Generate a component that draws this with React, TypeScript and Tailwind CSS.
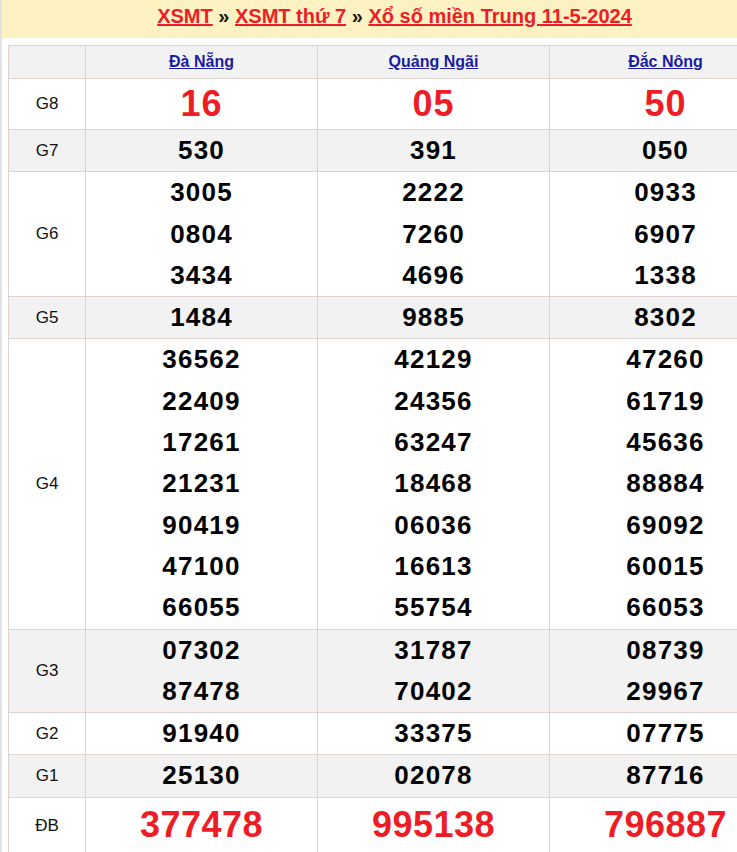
const provinces = ["Đà Nẵng", "Quảng Ngãi", "Đắc Nông"];

type Row = { label: string; values: string[][]; kind?: "big" | "normal" };

const rows: Row[] = [
  { label: "G8", kind: "big", values: [["16"], ["05"], ["50"]] },
  { label: "G7", values: [["530"], ["391"], ["050"]] },
  {
    label: "G6",
    values: [
      ["3005", "0804", "3434"],
      ["2222", "7260", "4696"],
      ["0933", "6907", "1338"],
    ],
  },
  { label: "G5", values: [["1484"], ["9885"], ["8302"]] },
  {
    label: "G4",
    values: [
      ["36562", "22409", "17261", "21231", "90419", "47100", "66055"],
      ["42129", "24356", "63247", "18468", "06036", "16613", "55754"],
      ["47260", "61719", "45636", "88884", "69092", "60015", "66053"],
    ],
  },
  {
    label: "G3",
    values: [
      ["07302", "87478"],
      ["31787", "70402"],
      ["08739", "29967"],
    ],
  },
  { label: "G2", values: [["91940"], ["33375"], ["07775"]] },
  { label: "G1", values: [["25130"], ["02078"], ["87716"]] },
  { label: "ĐB", kind: "big", values: [["377478"], ["995138"], ["796887"]] },
];

export default function App() {
  return (
    <div className="w-[737px] overflow-hidden bg-white font-['Liberation_Sans',Arial,sans-serif]">
      <div className="w-[787px] border-l-2 border-[#e2e2e2] min-h-[852px]">
        {/* Title bar */}
        <div className="h-[38px] bg-[#fff2c2] pt-1 text-center text-[20px] font-bold leading-6">
          <a href="#" className="text-[#ec1d26] underline">XSMT</a>
          <span className="text-[#1a1a1a]"> » </span>
          <a href="#" className="text-[#ec1d26] underline">XSMT thứ 7</a>
          <span className="text-[#1a1a1a]"> » </span>
          <a href="#" className="text-[#ec1d26] underline">Xổ số miền Trung 11-5-2024</a>
        </div>

        {/* Results table */}
        <table className="ml-[6px] mt-[7px] w-[773px] table-fixed border-collapse">
          <colgroup>
            <col className="w-[77px]" />
            <col className="w-[232px]" />
            <col className="w-[232px]" />
            <col className="w-[232px]" />
          </colgroup>
          <thead>
            <tr className="bg-[#f2f2f2]">
              <th className="h-[33px] border border-[#dcd4ce]"></th>
              {provinces.map((p) => (
                <th key={p} className="h-[33px] border border-[#dcd4ce] p-0 text-center text-[16px] font-bold">
                  <a href="#" className="text-[#1c1ca3] underline">{p}</a>
                </th>
              ))}
            </tr>
          </thead>
          <tbody>
            {rows.map((row, i) => (
              <tr key={row.label} className={i % 2 === 1 ? "bg-[#f2f2f2]" : "bg-white"}>
                <td className="border border-[#dcd4ce] p-0 text-center text-[17px] text-[#111]">{row.label}</td>
                {row.values.map((nums, j) => (
                  <td key={j} className="border border-[#dcd4ce] p-0 text-center">
                    {nums.map((n) =>
                      row.kind === "big" ? (
                        <div
                          key={n}
                          className={
                            row.label === "ĐB"
                              ? "h-[56px] leading-[54px] text-[36px] font-bold tracking-[0.5px] text-[#ee1d25]"
                              : "h-[50px] leading-[50px] text-[36px] font-bold tracking-[1px] text-[#ee1d25]"
                          }
                        >
                          {n}
                        </div>
                      ) : (
                        <div key={n} className="h-[41.3px] leading-[41.3px] text-[26px] font-bold tracking-[1.2px] text-black">
                          {n}
                        </div>
                      )
                    )}
                  </td>
                ))}
              </tr>
            ))}
          </tbody>
        </table>
      </div>
    </div>
  );
}
